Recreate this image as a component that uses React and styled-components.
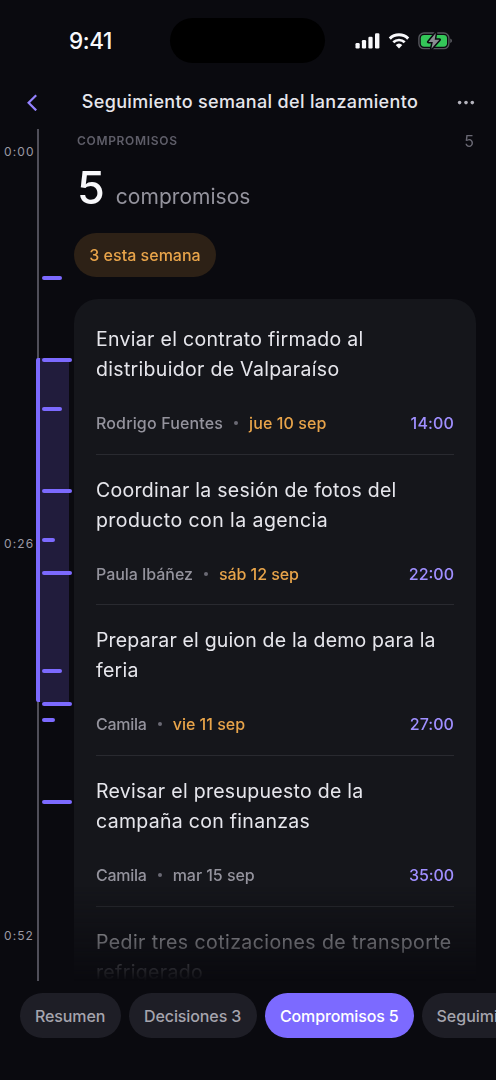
import styled, { createGlobalStyle } from "styled-components";

const GlobalStyle = createGlobalStyle`
  * {
    box-sizing: border-box;
  }
  body {
    margin: 0;
    background: #0a0a0f;
    font-family: Inter, "Liberation Sans", sans-serif;
  }
`;

const Screen = styled.div`
  width: 496px;
  height: 1080px;
  display: flex;
  flex-direction: column;
  overflow: hidden;
  background: #0a0a0f;
  color: #e6e6ec;
`;

const StatusBar = styled.div`
  height: 80px;
  display: grid;
  grid-template-columns: 170px 155px 1fr;
  align-items: center;
`;

const Clock = styled.div`
  padding-left: 69px;
  font-size: 22.5px;
  font-weight: 500;
  line-height: 28px;
  letter-spacing: -0.4px;
  color: #f8f8fb;
  margin-top: 2px;
`;

const Island = styled.div`
  height: 45px;
  border-radius: 23px;
  background: #000;
`;

const StatusIcons = styled.div`
  padding: 2px 0 0 30px;
  display: flex;
  align-items: center;
  gap: 8px;
`;

const Header = styled.header`
  height: 48px;
  display: flex;
  align-items: center;
  justify-content: space-between;
  padding: 0 21px 4px 26px;
`;

const Title = styled.h1`
  margin: 0;
  padding-left: 5px;
  font-size: 18px;
  font-weight: 500;
  letter-spacing: 0.33px;
  line-height: 22px;
  white-space: nowrap;
`;

const Main = styled.main`
  height: 853px;
  display: grid;
  grid-template-columns: 74px 1fr;
`;

/* the tick positions are times on the rail, so they sit on a free canvas */
const Rail = styled.aside`
  position: relative;
  overflow: hidden;
`;

const RailLine = styled.div`
  position: absolute;
  left: 37px;
  top: 1px;
  bottom: 0;
  width: 2px;
  background: #504f59;
`;

const RailRange = styled.div`
  position: absolute;
  left: 36px;
  top: 230px;
  width: 33.4px;
  height: 344px;
  border-left: 4px solid #7c6aff;
  border-radius: 2px 0 0 2px;
  background: #211c3c;
`;

const Tick = styled.div`
  position: absolute;
  left: 42px;
  top: ${(p) => p.$top}px;
  width: ${(p) => p.$width}px;
  height: 4px;
  border-radius: 2px;
  background: #7c6aff;
`;

const RailLabel = styled.span`
  position: absolute;
  left: 4px;
  top: ${(p) => p.$top}px;
  font-size: 12px;
  line-height: 16px;
  letter-spacing: 1.1px;
  color: #9a99a4;
`;

const Content = styled.section`
  padding-right: 20px;
  overflow: hidden;
  mask-image: linear-gradient(to bottom, #000 757px, transparent 853px);
`;

const SectionHead = styled.div`
  height: 25px;
  display: flex;
  align-items: center;
  justify-content: space-between;
  padding: 0 2px 0 3px;
  font-size: 12px;
  font-weight: 600;
  letter-spacing: 0.68px;
  color: #5f5e69;
`;

const SectionCount = styled.span`
  font-size: 16px;
  font-weight: 400;
  letter-spacing: 0;
  color: #6a6974;
`;

const Summary = styled.div`
  height: 80px;
  display: flex;
  align-items: baseline;
  gap: 11px;
  padding: 8px 0 0 3px;
  line-height: 54px;
`;

const BigNumber = styled.span`
  font-size: 45px;
  font-weight: 550;
  color: #f8f8fb;
`;

const BigLabel = styled.span`
  font-size: 21px;
  letter-spacing: 0.03px;
  color: #94939d;
`;

const WeekBadge = styled.div`
  width: 142px;
  height: 44px;
  display: flex;
  align-items: center;
  justify-content: center;
  border-radius: 22px;
  background: #2d2116;
  color: #e8a44a;
  font-size: 16px;
  font-weight: 500;
  letter-spacing: 0.02px;
  white-space: nowrap;
`;

const Card = styled.div`
  margin-top: 22px;
  padding: 5px 22px 4px;
  border-radius: 24px;
  background: #15161b;
`;

const Item = styled.article`
  height: 150.7px;
  padding-top: 19.9px;
  border-bottom: 1px solid #292a30;
`;

const Line = styled.div`
  height: 30px;
  font-size: 19.5px;
  line-height: 30px;
  letter-spacing: ${(p) => p.$track || 0}px;
  white-space: nowrap;
`;

const Meta = styled.div`
  height: 20px;
  margin-top: 29px;
  display: flex;
  align-items: center;
  font-size: 16px;
  font-weight: 500;
  line-height: 20px;
  color: #94939d;
  white-space: nowrap;
`;

const Owner = styled.span`
  letter-spacing: ${(p) => p.$track || 0}px;
`;

const Dot = styled.span`
  width: 4px;
  height: 4px;
  margin: 0 11px;
  border-radius: 50%;
  background: #6a6974;
`;

const Due = styled.span`
  color: ${(p) => (p.$soon ? "#e8a44a" : "#94939d")};
  letter-spacing: ${(p) => p.$track || 0}px;
`;

const Time = styled.span`
  margin-left: auto;
  color: #a08fff;
  letter-spacing: ${(p) => p.$track || 0}px;
`;

const Tabs = styled.nav`
  display: flex;
  gap: 8px;
  padding: 12px 0 0 20px;
`;

const Tab = styled.button`
  flex: none;
  width: ${(p) => p.$width}px;
  height: 45px;
  padding: 0 0 0 15px;
  border: none;
  border-radius: 23px;
  text-align: left;
  font-family: inherit;
  font-size: 16px;
  font-weight: 500;
  letter-spacing: ${(p) => p.$track || 0}px;
  white-space: nowrap;
  color: ${(p) => (p.$active ? "#fff" : "#a6a5ae")};
  background: ${(p) => (p.$active ? "#7c6aff" : "#1e1e26")};
`;

const ticks = [
  { top: 148, width: 20 },
  { top: 230, width: 30 },
  { top: 279, width: 20 },
  { top: 361, width: 30 },
  { top: 410, width: 12.5 },
  { top: 443, width: 30 },
  { top: 541, width: 20 },
  { top: 574, width: 30 },
  { top: 590, width: 12.5 },
  { top: 672, width: 30 },
];

const labels = [
  { top: 16, text: "0:00" },
  { top: 408, text: "0:26" },
  { top: 800, text: "0:52" },
];

const items = [
  {
    lines: [["Enviar el contrato firmado al", 0.3], ["distribuidor de Valparaíso", 0.31]],
    owner: ["Rodrigo Fuentes", 0.15],
    due: ["jue 10 sep", 0.1],
    soon: true,
    time: ["14:00", 0.15],
  },
  {
    lines: [["Coordinar la sesión de fotos del", 0.27], ["producto con la agencia", 0.43]],
    owner: ["Paula Ibáñez", -0.05],
    due: ["sáb 12 sep", -0.05],
    soon: true,
    time: ["22:00", 0],
  },
  {
    lines: [["Preparar el guion de la demo para la", 0.17], ["feria", 0.3]],
    owner: ["Camila", -0.25],
    due: ["vie 11 sep", 0],
    soon: true,
    time: ["27:00", 0.05],
  },
  {
    lines: [["Revisar el presupuesto de la", 0.28], ["campaña con finanzas", 0.3]],
    owner: ["Camila", -0.25],
    due: ["mar 15 sep", -0.05],
    time: ["35:00", -0.1],
  },
  {
    lines: [["Pedir tres cotizaciones de transporte", 0.43], ["refrigerado", 0.35]],
    owner: ["Rodrigo Fuentes", 0.15],
    due: ["vie 18 sep", 0],
    time: ["41:00", 0],
  },
];

const tabs = [
  { text: "Resumen", width: 101, track: -0.12 },
  { text: "Decisiones 3", width: 128, track: -0.1 },
  { text: "Compromisos 5", width: 148.5, track: -0.14, active: true },
  { text: "Seguimiento", width: 130, track: 0 },
];

const SignalIcon = () => (
  <svg width="25" height="16" viewBox="0 0 25 16" fill="#f8f8fb">
    <rect x="0.5" y="10" width="4.2" height="5.5" rx="1.2" />
    <rect x="6.9" y="7" width="4.2" height="8.5" rx="1.2" />
    <rect x="13.4" y="3.7" width="4.2" height="11.8" rx="1.2" />
    <rect x="20" y="0.3" width="4.4" height="15.2" rx="1.2" />
  </svg>
);

const WifiIcon = () => (
  <svg width="22" height="16" viewBox="0 0 22 16" fill="none">
    <path d="M1.8 5.6A13.2 13.2 0 0 1 20.2 5.6" stroke="#f8f8fb" strokeWidth="3" />
    <path d="M5.3 9.3A8.2 8.2 0 0 1 16.7 9.3" stroke="#f8f8fb" strokeWidth="2.7" />
    <path d="M11 15.4L7.7 12.1A4.8 4.8 0 0 1 14.3 12.1Z" fill="#f8f8fb" />
  </svg>
);

const BatteryIcon = () => (
  <svg width="35" height="18" viewBox="0 0 35 18">
    <rect x="0.9" y="1" width="30" height="15.6" rx="5" fill="none" stroke="#55565c" strokeWidth="1.4" />
    <path d="M32.2 6.6C33.6 7 34 8 34 8.8C34 9.6 33.6 10.6 32.2 11Z" fill="#55565c" />
    <rect x="2.8" y="2.9" width="26.2" height="11.8" rx="3.4" fill="#34c759" />
    <path
      d="M17.8 1L10.4 9.9H14.8L13.4 16.8L21.4 7.7H16.7Z"
      fill="#8b8c92"
      stroke="#0a0a0f"
      strokeWidth="3"
      strokeLinejoin="round"
      paintOrder="stroke"
    />
  </svg>
);

const BackIcon = () => (
  <svg width="12" height="18" viewBox="0 0 12 18" fill="none">
    <path d="M10.2 2.2L2.6 9.8L10.2 17.4" stroke="#9482ff" strokeWidth="2.2" />
  </svg>
);

const MoreIcon = () => (
  <svg width="18" height="6" viewBox="0 0 18 6" fill="#b4b3bc">
    <circle cx="2.6" cy="3.6" r="1.8" />
    <circle cx="9" cy="3.6" r="1.8" />
    <circle cx="15.3" cy="3.6" r="1.8" />
  </svg>
);

const App = () => {
  return (
    <Screen>
      <GlobalStyle />
      <StatusBar>
        <Clock>9:41</Clock>
        <Island />
        <StatusIcons>
          <SignalIcon />
          <WifiIcon />
          <BatteryIcon />
        </StatusIcons>
      </StatusBar>
      <Header>
        <BackIcon />
        <Title>Seguimiento semanal del lanzamiento</Title>
        <MoreIcon />
      </Header>
      <Main>
        <Rail>
          <RailLine />
          <RailRange />
          {ticks.map((tick) => (
            <Tick key={tick.top} $top={tick.top} $width={tick.width} />
          ))}
          {labels.map((label) => (
            <RailLabel key={label.text} $top={label.top}>
              {label.text}
            </RailLabel>
          ))}
        </Rail>
        <Content>
          <SectionHead>
            COMPROMISOS
            <SectionCount>5</SectionCount>
          </SectionHead>
          <Summary>
            <BigNumber>5</BigNumber>
            <BigLabel>compromisos</BigLabel>
          </Summary>
          <WeekBadge>3 esta semana</WeekBadge>
          <Card>
            {items.map((item) => (
              <Item key={item.time[0]}>
                {item.lines.map(([text, track]) => (
                  <Line key={text} $track={track}>
                    {text}
                  </Line>
                ))}
                <Meta>
                  <Owner $track={item.owner[1]}>{item.owner[0]}</Owner>
                  <Dot />
                  <Due $soon={item.soon} $track={item.due[1]}>
                    {item.due[0]}
                  </Due>
                  <Time $track={item.time[1]}>{item.time[0]}</Time>
                </Meta>
              </Item>
            ))}
          </Card>
        </Content>
      </Main>
      <Tabs>
        {tabs.map((tab) => (
          <Tab key={tab.text} $width={tab.width} $track={tab.track} $active={tab.active}>
            {tab.text}
          </Tab>
        ))}
      </Tabs>
    </Screen>
  );
};

export default App;
